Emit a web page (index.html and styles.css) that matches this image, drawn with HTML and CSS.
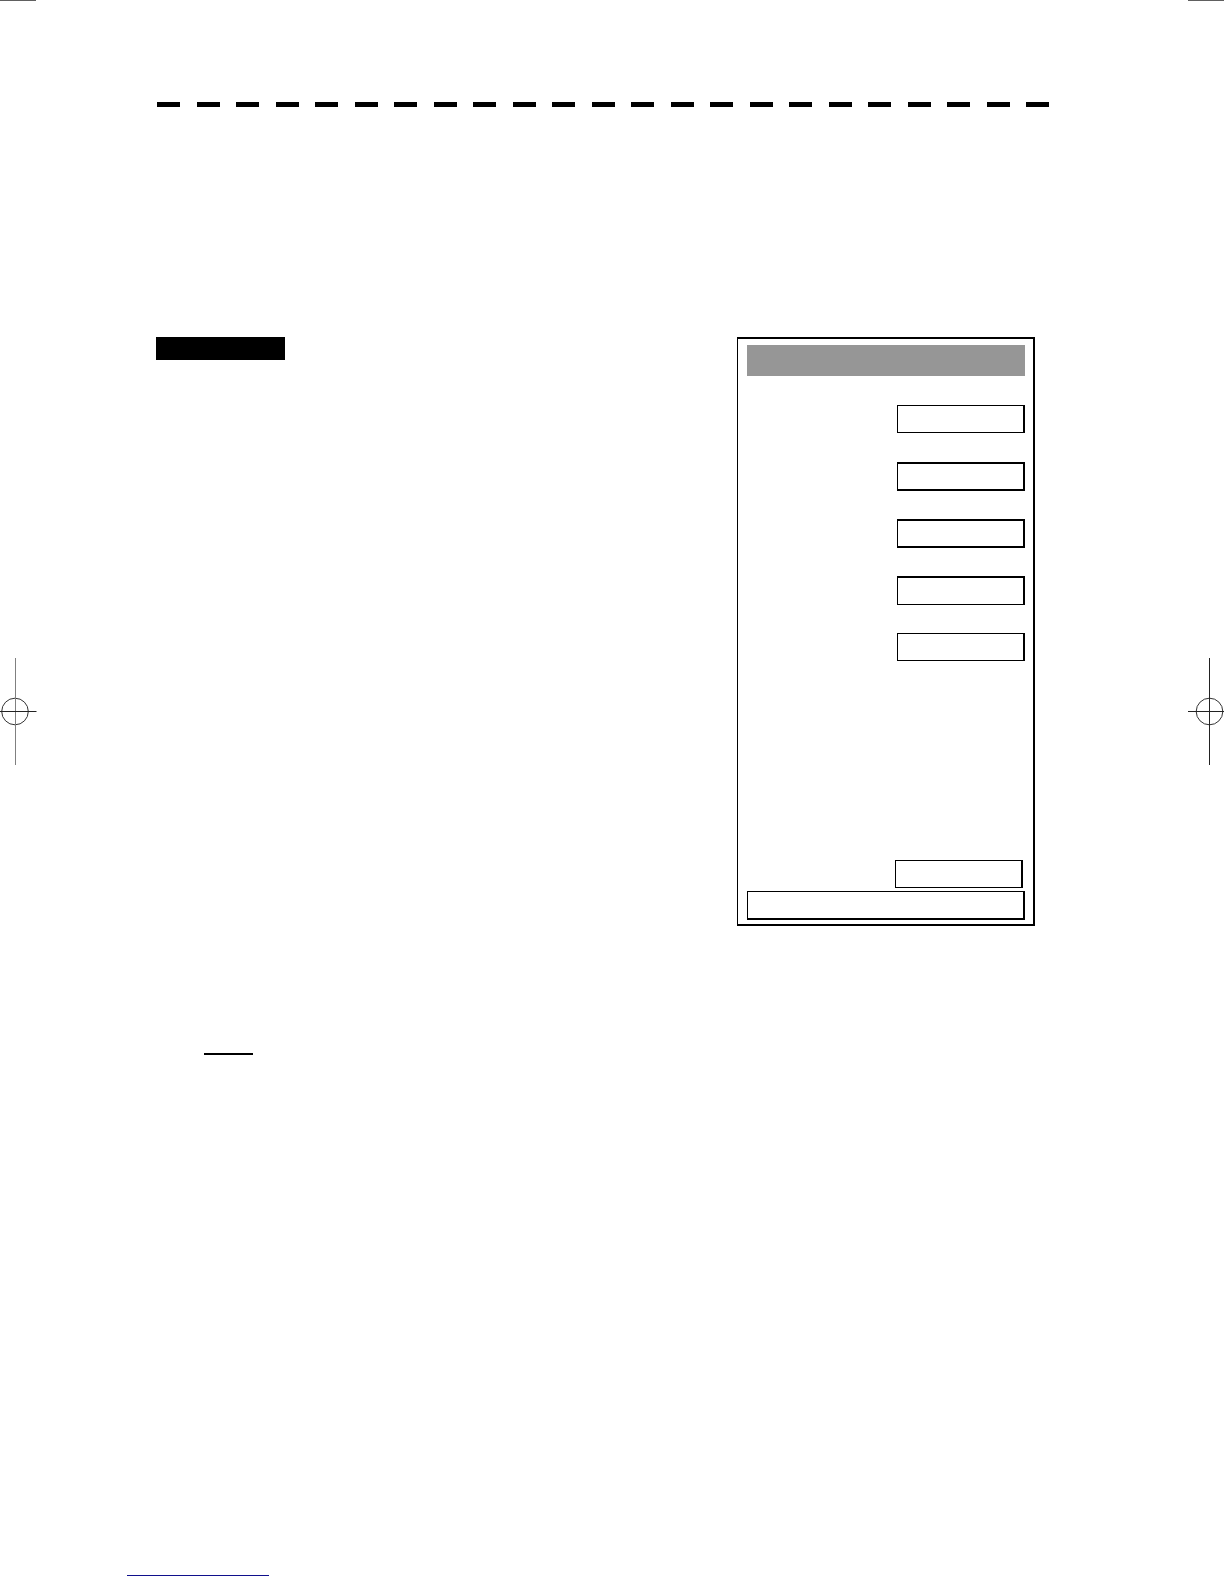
FILE: index.html
```html
<!DOCTYPE html>
<html lang="en">
<head>
<meta charset="utf-8">
<meta name="viewport" content="width=device-width, initial-scale=1">
<link rel="stylesheet" href="styles.css">
</head>
<body>
<div class="sheet">
  <div class="crops"><span class="crop"></span><span class="crop"></span></div>
  <div class="body">
    <svg class="mark" width="37" height="107" viewBox="0 0 37 107" fill="none" aria-hidden="true">
      <circle cx="15" cy="53.5" r="13.3" stroke="#333"/>
      <path d="M15.5 0V107" stroke="#808080"/>
      <path d="M0 53.5H36.5" stroke="#222"/>
    </svg>
    <main class="content">
      <div class="rule">
        <span></span><span></span><span></span><span></span><span></span><span></span><span></span><span></span><span></span><span></span><span></span><span></span><span></span><span></span><span></span><span></span><span></span><span></span><span></span><span></span><span></span><span></span><span></span>
      </div>
      <div class="columns">
        <div class="heading"></div>
        <form class="panel">
          <div class="panel-title"></div>
          <div class="fields">
            <input class="box" type="text" aria-label="Value 1">
            <input class="box heavy-top heavy-bottom" type="text" aria-label="Value 2">
            <input class="box heavy-top heavy-bottom" type="text" aria-label="Value 3">
            <input class="box heavy-top" type="text" aria-label="Value 4">
            <input class="box" type="text" aria-label="Value 5">
          </div>
          <div class="panel-foot">
            <input class="box inset" type="text" aria-label="Value 6">
            <input class="box wide heavy-bottom" type="text" aria-label="Status">
          </div>
        </form>
      </div>
      <div class="underline"></div>
    </main>
    <svg class="mark" width="36" height="107" viewBox="0 0 36 107" fill="none" aria-hidden="true">
      <circle cx="21.5" cy="53.5" r="13.3" stroke="#333"/>
      <path d="M21.5 0V107M0 53.5H36" stroke="#222"/>
    </svg>
  </div>
  <footer class="footer"><a class="link" href="#" aria-label="Link"></a></footer>
</div>
</body>
</html>
```
FILE: styles.css
```css
* {
  box-sizing: border-box;
}

body {
  margin: 0;
  background: #fff;
  color: #000;
  font-family: "Liberation Sans", Arial, sans-serif;
}

.sheet {
  display: flex;
  flex-direction: column;
  min-height: 100vh;
}

.crops {
  display: flex;
  justify-content: space-between;
}

.crop {
  width: 36px;
  height: 1px;
  background: #606060;
}

.body {
  display: grid;
  grid-template-columns: 37px 1fr 36px;
  flex: 1;
}

.mark {
  display: block;
  margin-top: 657px;
}

.content {
  padding: 101px 139px 0 119px;
}

.rule {
  display: flex;
  justify-content: space-between;
  padding-left: 1px;
}

.rule span {
  width: 23px;
  height: 5px;
  background: #000;
}

.columns {
  display: flex;
  justify-content: space-between;
  align-items: flex-start;
  margin-top: 230px;
  padding-right: 14px;
}

.heading {
  width: 129px;
  height: 23px;
  background: #000;
}

.panel {
  display: flex;
  flex-direction: column;
  width: 298px;
  min-height: 589px;
  padding: 6px 8px 4px 9px;
  border: 2px solid #000;
  border-left-width: 1px;
}

.panel-title {
  height: 31px;
  background: #969696;
}

.fields {
  display: grid;
  grid-auto-rows: 57px;
  align-items: start;
  justify-items: end;
  margin-top: 29px;
}

.box {
  display: block;
  width: 128px;
  height: 28px;
  margin: 0;
  padding: 0 8px;
  border: 1px solid #000;
  border-right-width: 2px;
  border-radius: 0;
  background: #fff;
  font: 16px "Liberation Sans", Arial, sans-serif;
}

.heavy-top {
  height: 29px;
  border-top-width: 2px;
}

.heavy-bottom {
  height: 29px;
  border-bottom-width: 2px;
}

.wide {
  width: 100%;
}

.panel-foot {
  display: flex;
  flex-direction: column;
  align-items: flex-end;
  gap: 3px;
  margin-top: auto;
}

.inset {
  margin-right: 2px;
}

.underline {
  width: 49px;
  height: 2px;
  margin: 127px 0 0 48px;
  background: #000;
}

.footer {
  padding: 0 127px 8px;
}

.link {
  display: block;
  width: 142px;
  height: 16px;
  border-bottom: 1px solid #10108c;
}
```
